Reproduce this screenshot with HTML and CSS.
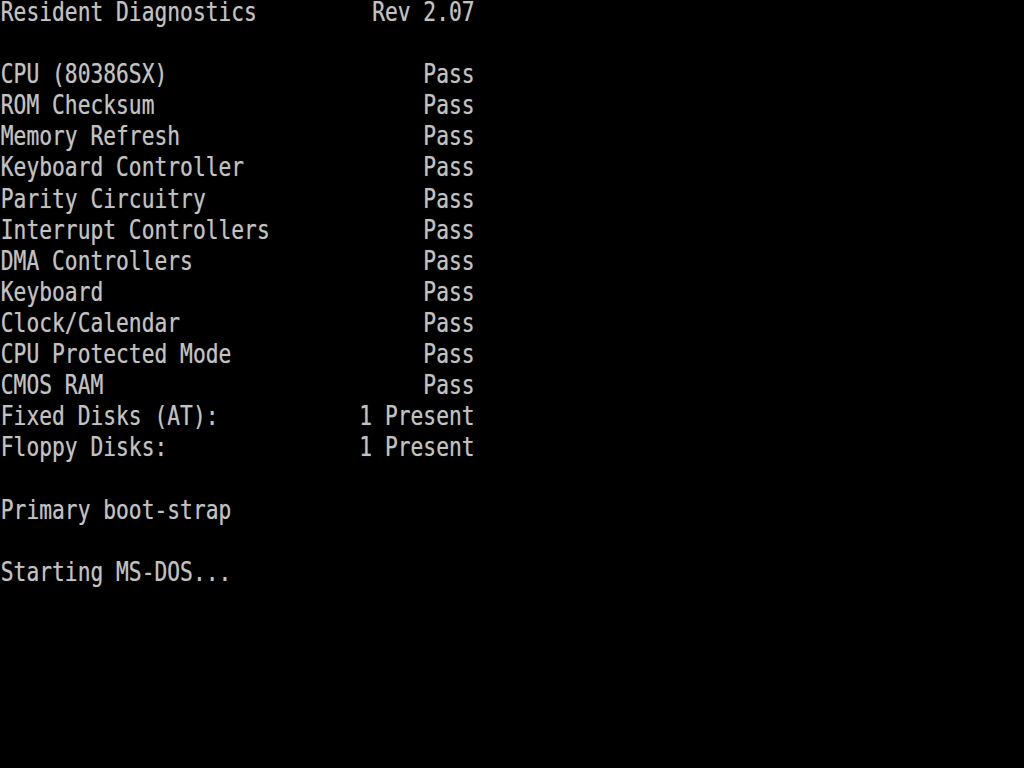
FILE: index.html
```html
<!DOCTYPE html>
<html lang="en">
<head>
  <meta charset="UTF-8" />
  <meta name="viewport" content="width=device-width, initial-scale=1.0"/>
  <title>Resident Diagnostics</title>
  <link rel="stylesheet" href="styles.css">
</head>
<body>
  <div class="screen">
    <div class="row"><span>Resident Diagnostics</span><span>Rev 2.07</span></div>
    <div class="row blank"></div>
    <div class="row"><span>CPU (80386SX)</span><span>Pass</span></div>
    <div class="row"><span>ROM Checksum</span><span>Pass</span></div>
    <div class="row"><span>Memory Refresh</span><span>Pass</span></div>
    <div class="row"><span>Keyboard Controller</span><span>Pass</span></div>
    <div class="row"><span>Parity Circuitry</span><span>Pass</span></div>
    <div class="row"><span>Interrupt Controllers</span><span>Pass</span></div>
    <div class="row"><span>DMA Controllers</span><span>Pass</span></div>
    <div class="row"><span>Keyboard</span><span>Pass</span></div>
    <div class="row"><span>Clock/Calendar</span><span>Pass</span></div>
    <div class="row"><span>CPU Protected Mode</span><span>Pass</span></div>
    <div class="row"><span>CMOS RAM</span><span>Pass</span></div>
    <div class="row"><span>Fixed Disks (AT):</span><span>1 Present</span></div>
    <div class="row"><span>Floppy Disks:</span><span>1 Present</span></div>
    <div class="row blank"></div>
    <div class="row"><span>Primary boot-strap</span></div>
    <div class="row blank"></div>
    <div class="row"><span>Starting MS-DOS...</span></div>
  </div>
</body>
</html>
```

FILE: styles.css
```css
html, body {
  margin: 0;
  padding: 0;
  background: #000;
  height: 100%;
  overflow: hidden;
}

.screen {
  font-family: 'DejaVu Sans Mono', 'Liberation Mono', monospace;
  font-size: 26px;
  line-height: 25.1px;
  color: #c2c2c2;
  text-shadow: 0 0 1px rgba(200, 200, 200, 0.5);
  padding-left: 1px;
  transform: scaleX(0.818);
  transform-origin: 0 0;
}

.row {
  display: flex;
  justify-content: space-between;
  width: 37ch;
  height: 31.1px;
  white-space: pre;
}
```
